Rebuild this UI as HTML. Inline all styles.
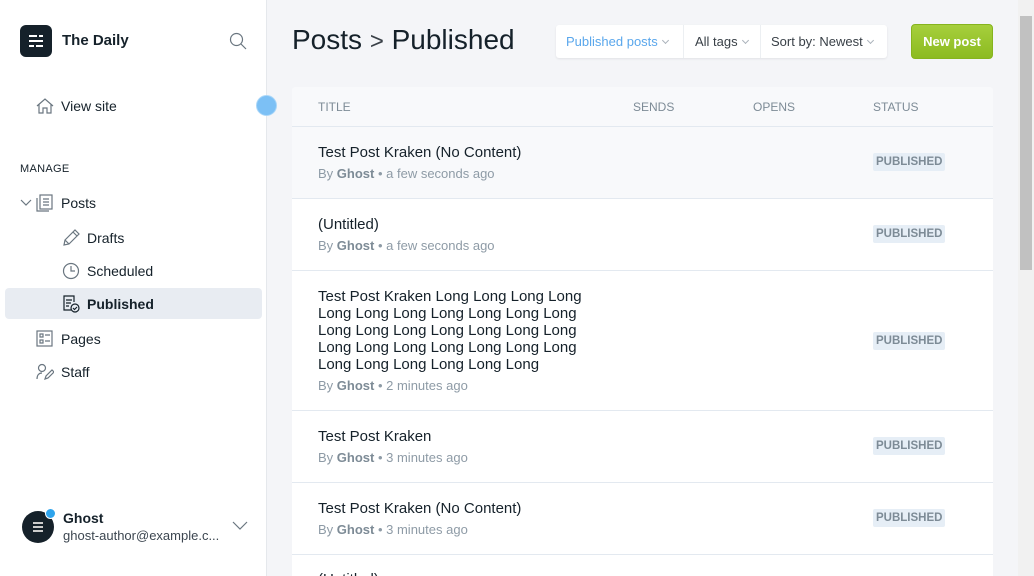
<!DOCTYPE html>
<html style="overflow:hidden"><head><meta charset="utf-8"><style>
*{box-sizing:border-box;margin:0;padding:0}
html,body{width:1034px;height:576px;overflow:hidden}
body{font-family:"Liberation Sans",sans-serif;background:#f4f5f8;position:relative;color:#15212a}
.sb{position:absolute;left:0;top:0;width:267px;height:576px;background:#fff;border-right:1px solid #e5e8ec}
.logo{position:absolute;left:20px;top:25px;width:32px;height:32px;background:#15212a;border-radius:6px}
.logo i{position:absolute;height:2px;background:#fff;left:9px}
.t{position:absolute;font-size:15px;color:#15212a}
.ic{position:absolute;stroke:#6a7680;fill:none;stroke-width:1.2}
.tbl{position:absolute;left:292px;top:87px;width:701px;height:489px;background:#fff;border-radius:4px 4px 0 0;overflow:hidden}
.hd{height:40px;background:#f8f9fb;border-bottom:1px solid #e3e9f0;position:relative;font-size:12px;color:#7d8b96}
.hd span{position:absolute;top:13px}
.row{position:relative;border-bottom:1px solid #e3e9f0}
.row .ti{position:absolute;left:26px;font-size:15px;line-height:17px;color:#15212a}
.row .by{position:absolute;left:26px;font-size:13px;color:#8e9ba6}
.row .by b{color:#7d8b96}
.badge{position:absolute;left:581px;font-size:11.5px;font-weight:bold;color:#7d8b96;background:#e6eef6;padding:3px 3px;border-radius:2px}
.chev{display:inline-block;width:5px;height:5px;border-right:1px solid #aab2ba;border-bottom:1px solid #aab2ba;transform:rotate(45deg);margin-left:5px;position:relative;top:-3px}
</style></head><body>
<div class="sb">
 <div class="logo"><i style="top:10px;width:8px"></i><i style="top:10px;left:19px;width:4px"></i><i style="top:15px;width:14px"></i><i style="top:20px;width:5px"></i><i style="top:20px;left:16px;width:7px"></i></div>
 <div class="t" style="left:62px;top:32px;font-weight:bold;font-size:15px">The Daily</div>
 <svg class="ic" style="left:229px;top:32px" width="18" height="18"><circle cx="7.5" cy="7.5" r="6"/><path d="M12 12l5 5"/></svg>
 <svg class="ic" style="left:36px;top:97px" width="18" height="18"><path d="M1 9L9 2l8 7M3 7v9h4v-5h4v5h4V7"/></svg>
 <div class="t" style="left:61px;top:98px;font-size:14px">View site</div>
 <div class="t" style="left:20px;top:163px;font-size:11px;letter-spacing:.3px">MANAGE</div>
 <svg class="ic" style="left:20px;top:198px" width="12" height="10"><path d="M1 2l5 5 5-5"/></svg>
 <svg class="ic" style="left:36px;top:194px" width="18" height="18"><rect x="4" y="1" width="12" height="14"/><path d="M1 4v13h12M7 5h6M7 8h6M7 11h6"/></svg>
 <div class="t" style="left:61px;top:195px;font-size:14px">Posts</div>
 <svg class="ic" style="left:62px;top:229px" width="18" height="18"><path d="M2 16l1-5L13 1l4 4L7 15zM11 3l4 4M3 11l4 4"/></svg>
 <div class="t" style="left:87px;top:230px;font-size:14px">Drafts</div>
 <svg class="ic" style="left:62px;top:262px" width="18" height="18"><circle cx="9" cy="9" r="7.5"/><path d="M9 4v5h4"/></svg>
 <div class="t" style="left:87px;top:263px;font-size:14px">Scheduled</div>
 <div style="position:absolute;left:5px;top:288px;width:257px;height:31px;background:#e8ecf2;border-radius:4px"></div>
 <svg class="ic" style="left:62px;top:295px;stroke:#15212a" width="18" height="18"><path d="M9 15H2V1h10v6M4 5h6M4 8h5M4 11h3"/><circle cx="13" cy="13" r="4"/><path d="M11 13l1.5 1.5L15 12"/></svg>
 <div class="t" style="left:87px;top:296px;font-size:14px;font-weight:bold">Published</div>
 <svg class="ic" style="left:36px;top:330px" width="18" height="18"><rect x="1" y="1" width="15" height="15"/><path d="M4 4h3v3H4zM4 10h3v3H4zM9 5h5M9 11h5"/></svg>
 <div class="t" style="left:61px;top:331px;font-size:14px">Pages</div>
 <svg class="ic" style="left:36px;top:363px" width="18" height="18"><circle cx="6" cy="5" r="3.5"/><path d="M1 16c0-4 2-6 5-6M9 16l1-3 6-6 2 2-6 6z"/></svg>
 <div class="t" style="left:61px;top:364px;font-size:14px">Staff</div>
 <div style="position:absolute;left:22px;top:511px;width:32px;height:32px;border-radius:50%;background:#15212a"><i style="position:absolute;left:11px;top:11px;width:10px;height:2px;background:#ccc"></i><i style="position:absolute;left:11px;top:15px;width:10px;height:2px;background:#ccc"></i><i style="position:absolute;left:11px;top:19px;width:10px;height:2px;background:#ccc"></i></div>
 <div style="position:absolute;left:45px;top:508px;width:11px;height:11px;border-radius:50%;background:#2fa4ec;border:1px solid #fff"></div>
 <div class="t" style="left:63px;top:510px;font-size:14px;font-weight:bold">Ghost</div>
 <div class="t" style="left:63px;top:528px;font-size:13px;color:#3c4650">ghost-author@example.c...</div>
 <svg class="ic" style="left:232px;top:521px" width="16" height="10"><path d="M1 1l7 7 7-7"/></svg>
</div>
<div style="position:absolute;left:256px;top:95px;width:21px;height:21px;border-radius:50%;background:#7cc0f5;border:1px solid #a9d6f8"></div>
<div style="position:absolute;left:292px;top:24px;font-size:28px;color:#15212a;white-space:nowrap">Posts <span style="font-size:24px;color:#394047">&gt;</span> Published</div>
<div style="position:absolute;left:556px;top:25px;width:331px;height:33px;background:#fff;border-radius:3px;box-shadow:0 1px 2px rgba(0,0,0,.08);font-size:13px;color:#394047">
 <span style="position:absolute;left:10px;top:9px;color:#5aa7ec">Published posts<i class="chev"></i></span>
 <div style="position:absolute;left:127px;top:0;width:1px;height:33px;background:#eceff2"></div>
 <span style="position:absolute;left:139px;top:9px">All tags<i class="chev"></i></span>
 <div style="position:absolute;left:204px;top:0;width:1px;height:33px;background:#eceff2"></div>
 <span style="position:absolute;left:215px;top:9px">Sort by: Newest<i class="chev"></i></span>
</div>
<div style="position:absolute;left:911px;top:24px;width:82px;height:35px;background:linear-gradient(#a6cf3c,#8cbb21);border-radius:4px;border:1px solid #86b41e;color:#fff;font-weight:bold;font-size:13px;text-align:center;line-height:33px">New post</div>
<div class="tbl">
 <div class="hd"><span style="left:26px">TITLE</span><span style="left:341px">SENDS</span><span style="left:461px">OPENS</span><span style="left:581px">STATUS</span></div>
 <div class="row" style="height:72px;background:#f8f9fb"><div class="ti" style="top:17px">Test Post Kraken (No Content)</div><div class="by" style="top:39px">By <b>Ghost</b> • a few seconds ago</div><div class="badge" style="top:26px">PUBLISHED</div></div>
 <div class="row" style="height:72px"><div class="ti" style="top:17px">(Untitled)</div><div class="by" style="top:39px">By <b>Ghost</b> • a few seconds ago</div><div class="badge" style="top:26px">PUBLISHED</div></div>
 <div class="row" style="height:140px"><div class="ti" style="top:17px">Test Post Kraken Long Long Long Long<br>Long Long Long Long Long Long Long<br>Long Long Long Long Long Long Long<br>Long Long Long Long Long Long Long<br>Long Long Long Long Long Long</div><div class="by" style="top:107px">By <b>Ghost</b> • 2 minutes ago</div><div class="badge" style="top:61px">PUBLISHED</div></div>
 <div class="row" style="height:72px"><div class="ti" style="top:17px">Test Post Kraken</div><div class="by" style="top:39px">By <b>Ghost</b> • 3 minutes ago</div><div class="badge" style="top:26px">PUBLISHED</div></div>
 <div class="row" style="height:72px"><div class="ti" style="top:17px">Test Post Kraken (No Content)</div><div class="by" style="top:39px">By <b>Ghost</b> • 3 minutes ago</div><div class="badge" style="top:26px">PUBLISHED</div></div>
 <div class="row" style="height:72px"><div class="ti" style="top:16px">(Untitled)</div></div>
</div>
<div style="position:absolute;left:1018px;top:0;width:16px;height:576px;background:#f1f1f1"></div>
<div style="position:absolute;left:1020px;top:16px;width:12px;height:254px;background:#c1c1c1"></div>
</body></html>
